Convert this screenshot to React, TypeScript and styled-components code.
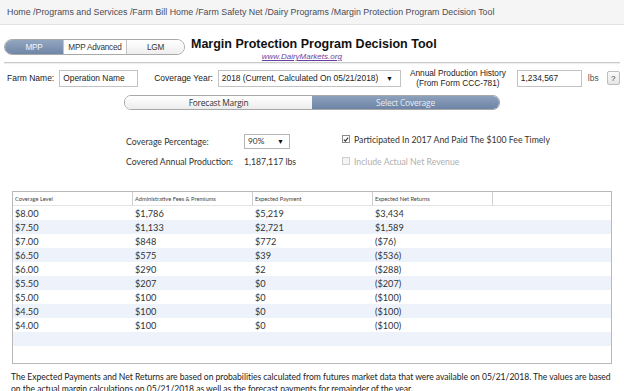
import React from 'react'
import styled, { createGlobalStyle } from 'styled-components'

const GlobalStyle = createGlobalStyle`
  html, body {
    margin: 0;
    padding: 0;
    background: #fff;
    overflow: hidden;
  }
  body {
    font-family: 'Liberation Sans', Arial, sans-serif;
    color: #222;
  }
`

type Row = {
  level: string
  fees: string
  payment: string
  net: string
}

const ROWS: Row[] = [
  { level: '$8.00', fees: '$1,786', payment: '$5,219', net: '$3,434' },
  { level: '$7.50', fees: '$1,133', payment: '$2,721', net: '$1,589' },
  { level: '$7.00', fees: '$848', payment: '$772', net: '($76)' },
  { level: '$6.50', fees: '$575', payment: '$39', net: '($536)' },
  { level: '$6.00', fees: '$290', payment: '$2', net: '($288)' },
  { level: '$5.50', fees: '$207', payment: '$0', net: '($207)' },
  { level: '$5.00', fees: '$100', payment: '$0', net: '($100)' },
  { level: '$4.50', fees: '$100', payment: '$0', net: '($100)' },
  { level: '$4.00', fees: '$100', payment: '$0', net: '($100)' },
]

const EMPTY_ROWS = 2

export default function App(): JSX.Element {
  return (
    <Page>
      <GlobalStyle />
      <Breadcrumb>
        Home /Programs and Services /Farm Bill Home /Farm Safety Net /Dairy
        Programs /Margin Protection Program Decision Tool
      </Breadcrumb>

      <TitleRow>
        <TabGroup>
          <Tab active>MPP</Tab>
          <Tab boxed>MPP Advanced</Tab>
          <Tab>LGM</Tab>
        </TabGroup>
        <TitleBlock>
          <Title>Margin Protection Program Decision Tool</Title>
          <SiteLink href="#">www.DairyMarkets.org</SiteLink>
        </TitleBlock>
      </TitleRow>

      <Divider />

      <FormRow>
        <Label>Farm Name:</Label>
        <TextInput width={79} defaultValue="Operation Name" />
        <Label>Coverage Year:</Label>
        <SelectBox width={183}>
          <span>2018 (Current, Calculated On 05/21/2018)</span>
          <Arrow>▼</Arrow>
        </SelectBox>
        <HistoryLabel>
          Annual Production History
          <br />
          (From Form CCC-781)
        </HistoryLabel>
        <TextInput width={65} defaultValue="1,234,567" />
        <Unit>lbs</Unit>
        <HelpButton>?</HelpButton>
      </FormRow>

      <SegmentRow>
        <Segment>
          <SegmentItem>Forecast Margin</SegmentItem>
          <SegmentItem active>Select Coverage</SegmentItem>
        </Segment>
      </SegmentRow>

      <OptionsGrid>
        <span>Coverage Percentage:</span>
        <SmallSelect>
          <span>90%</span>
          <Arrow>▼</Arrow>
        </SmallSelect>
        <CheckLine>
          <CheckBox checked>
            <svg width="7" height="7" viewBox="0 0 7 7">
              <path
                d="M1 3.6 L2.8 5.4 L6 1.4"
                fill="none"
                stroke="#333"
                strokeWidth="1.3"
              />
            </svg>
          </CheckBox>
          Participated In 2017 And Paid The $100 Fee Timely
        </CheckLine>

        <span>Covered Annual Production:</span>
        <span>1,187,117 lbs</span>
        <CheckLine disabled>
          <CheckBox />
          Include Actual Net Revenue
        </CheckLine>
      </OptionsGrid>

      <Table>
        <HeaderRow>
          <HeadCell>Coverage Level</HeadCell>
          <HeadCell>Administrative Fees &amp; Premiums</HeadCell>
          <HeadCell>Expected Payment</HeadCell>
          <HeadCell>Expected Net Returns</HeadCell>
          <HeadCell filler />
        </HeaderRow>
        {ROWS.map((row, i) => (
          <DataRow key={row.level} shaded={i % 2 === 1}>
            <Cell>{row.level}</Cell>
            <Cell>{row.fees}</Cell>
            <Cell>{row.payment}</Cell>
            <Cell>{row.net}</Cell>
          </DataRow>
        ))}
        {Array.from({ length: EMPTY_ROWS }).map((_, i) => (
          <DataRow key={`empty-${i}`} shaded={(ROWS.length + i) % 2 === 1} />
        ))}
      </Table>

      <Note>
        The Expected Payments and Net Returns are based on probabilities
        calculated from futures market data that were available on 05/21/2018.
        The values are based on the actual margin calculations on 05/21/2018 as
        well as the forecast payments for remainder of the year.
      </Note>
    </Page>
  )
}

const Page = styled.div`
  width: 624px;
  height: 391px;
  overflow: hidden;
`

const Breadcrumb = styled.div`
  height: 24px;
  padding: 0 7px;
  display: flex;
  align-items: center;
  background: #f5f5f5;
  border-bottom: 1px solid #e2e2e2;
  font-size: 8.85px;
  color: #4b4b57;
  white-space: nowrap;
`

const TitleRow = styled.div`
  display: flex;
  align-items: flex-start;
  padding: 12px 0 0 4px;
  height: 23px;
`

const TabGroup = styled.div`
  display: flex;
  height: 14px;
  border: 1px solid #a9a9a9;
  border-radius: 8px;
  overflow: hidden;
  margin-top: 2px;
`

const Tab = styled.div<{ active?: boolean; boxed?: boolean }>`
  width: ${({ active, boxed }) => (active ? 58 : boxed ? 62 : 57)}px;
  display: flex;
  align-items: center;
  justify-content: center;
  font-size: 8.2px;
  letter-spacing: -0.2px;
  color: ${({ active }) => (active ? '#f4f6fa' : '#333')};
  background: ${({ active, boxed }) =>
    active
      ? 'linear-gradient(#93a6c0, #6f86a7)'
      : boxed
        ? '#fff'
        : 'linear-gradient(#ffffff, #eeeeee)'};
  border-left: ${({ active }) => (active ? 'none' : '1px solid #c4c4c4')};
`

const TitleBlock = styled.div`
  display: flex;
  flex-direction: column;
  align-items: center;
  margin-left: 6px;
`

const Title = styled.h1`
  margin: 0;
  font-size: 12.5px;
  font-weight: bold;
  line-height: 15px;
  color: #111;
`

const SiteLink = styled.a`
  margin-right: 24px;
  font-size: 8px;
  font-style: italic;
  line-height: 9px;
  color: #6a3fa0;
  text-decoration: underline;
`

const Divider = styled.div`
  margin: 2px 4px 0;
  height: 1px;
  background: #c9c9c9;
  box-shadow: 0 1px 1px #ececec;
`

const FormRow = styled.div`
  display: flex;
  align-items: center;
  height: 28px;
  padding: 1px 0 0 7px;
  font-size: 8.5px;
  color: #222;
  white-space: nowrap;

  & > * {
    flex-shrink: 0;
  }
`

const Label = styled.span`
  margin-right: 5px;
  & + input {
    margin-right: 16px;
  }
`

const TextInput = styled.input<{ width: number }>`
  box-sizing: border-box;
  width: ${({ width }) => width}px;
  height: 17px;
  padding: 0 3px;
  border: 1px solid #c3c3c3;
  font-family: 'Liberation Sans', Arial, sans-serif;
  font-size: 8.4px;
  color: #222;
  outline: none;
`

const SelectBox = styled.div<{ width: number }>`
  box-sizing: border-box;
  width: ${({ width }) => width}px;
  height: 17px;
  display: flex;
  align-items: center;
  justify-content: space-between;
  padding: 0 7px 0 3px;
  border: 1px solid #c3c3c3;
  font-size: 8.4px;
  color: #222;
  overflow: hidden;
`

const Arrow = styled.span`
  font-size: 7px;
  color: #111;
`

const HistoryLabel = styled.div`
  width: 100px;
  margin: -1px 9px 0 7px;
  text-align: center;
  font-size: 8.3px;
  line-height: 10px;
`

const Unit = styled.span`
  margin-left: 6px;
  color: #555;
`

const HelpButton = styled.div`
  margin-left: 8px;
  width: 11px;
  height: 12px;
  border: 1px solid #bdbdbd;
  border-radius: 2px;
  background: linear-gradient(#fafafa, #e6e6e6);
  display: flex;
  align-items: center;
  justify-content: center;
  font-size: 8px;
  color: #333;
`

const SegmentRow = styled.div`
  display: flex;
  padding: 3px 0 0 124px;
`

const Segment = styled.div`
  display: flex;
  width: 374px;
  height: 13px;
  border: 1px solid #a8a8a8;
  border-radius: 7px;
  overflow: hidden;
`

const SegmentItem = styled.div<{ active?: boolean }>`
  flex: 1;
  display: flex;
  align-items: center;
  justify-content: center;
  font-family: 'Open Sans', 'Noto Sans', sans-serif;
  font-size: 8.4px;
  letter-spacing: -0.2px;
  color: ${({ active }) => (active ? '#e8ecf3' : '#333')};
  background: ${({ active }) =>
    active
      ? 'linear-gradient(#8da1bc, #6d84a6)'
      : 'linear-gradient(#ffffff, #ececec)'};
`

const OptionsGrid = styled.div`
  display: grid;
  grid-template-columns: 118px 98px auto;
  grid-auto-rows: 20px;
  align-items: center;
  padding: 21px 0 0 126px;
  font-family: Lato, 'Open Sans', sans-serif;
  font-size: 8.7px;
  color: #333;
`

const SmallSelect = styled.div`
  box-sizing: border-box;
  width: 46px;
  height: 15px;
  display: flex;
  align-items: center;
  justify-content: space-between;
  padding: 0 5px 0 3px;
  border: 1px solid #b5b5b5;
  font-size: 8.4px;
`

const CheckLine = styled.div<{ disabled?: boolean }>`
  display: flex;
  align-items: center;
  gap: 4px;
  margin-top: ${({ disabled }) => (disabled ? '0' : '-4px')};
  color: ${({ disabled }) => (disabled ? '#b0b0b0' : '#333')};
`

const CheckBox = styled.span<{ checked?: boolean }>`
  box-sizing: border-box;
  width: 8px;
  height: 8px;
  border: 1px solid ${({ checked }) => (checked ? '#8c8c8c' : '#cfcfcf')};
  background: ${({ checked }) => (checked ? '#fff' : '#f4f4f4')};
  display: flex;
  align-items: center;
  justify-content: center;
`

const Table = styled.div`
  box-sizing: border-box;
  margin: 20px 0 0 12px;
  width: 600px;
  height: 173px;
  border: 1px solid #b9b9b9;
  font-family: Lato, 'Open Sans', sans-serif;
  color: #333;
`

const HeaderRow = styled.div`
  display: grid;
  grid-template-columns: 120px 120px 120px 120px 1fr;
  height: 13px;
  border-bottom: 1px solid #e4e4e4;
`

const HeadCell = styled.div<{ filler?: boolean }>`
  display: flex;
  align-items: center;
  padding-left: 2px;
  font-size: 5.7px;
  color: #444;
  border-right: ${({ filler }) => (filler ? 'none' : '1px solid #cfcfcf')};
`

const DataRow = styled.div<{ shaded?: boolean }>`
  display: grid;
  grid-template-columns: 120px 120px 120px 120px 1fr;
  height: 14px;
  background: ${({ shaded }) => (shaded ? '#edf2fb' : '#fff')};
`

const Cell = styled.div`
  display: flex;
  align-items: center;
  padding-left: 2px;
  font-size: 9.2px;
  color: #333;
`

const Note = styled.p`
  margin: 7px 0 0 11px;
  width: 600px;
  font-family: Lato, 'Open Sans', sans-serif;
  font-size: 8.6px;
  letter-spacing: -0.04px;
  line-height: 12px;
  color: #222;
`
